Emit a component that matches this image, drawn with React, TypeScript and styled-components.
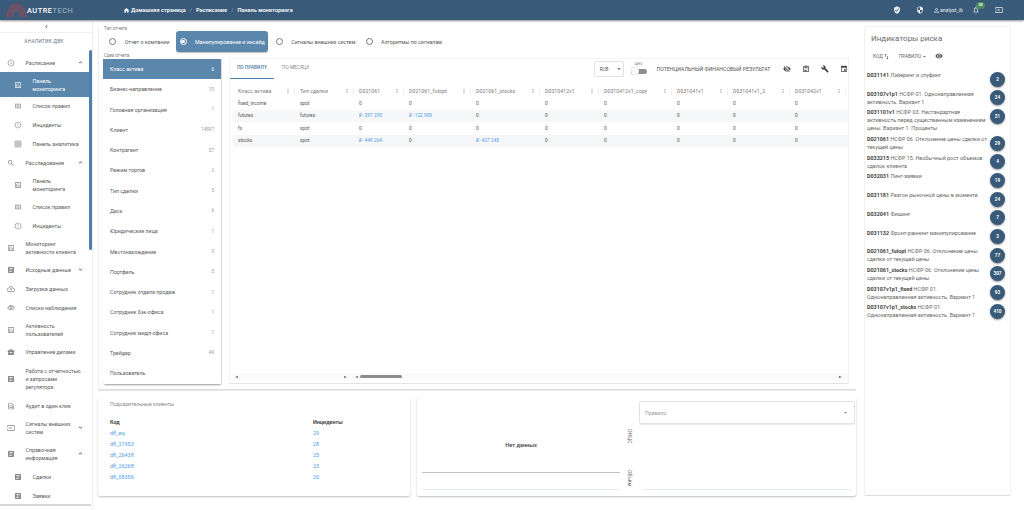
import React from 'react'
import styled, { createGlobalStyle } from 'styled-components'
import {
  MdAccessTime, MdOutlineAssessment, MdOutlineViewColumn, MdErrorOutline, MdGridOn, MdSearch, MdArticle,
  MdOutlineCloudUpload, MdOutlineVisibility, MdBusinessCenter, MdOutlineFindInPage, MdOutlineInput,
  MdExpandLess, MdExpandMore, MdChevronLeft, MdHome, MdVerifiedUser, MdSecurity, MdPersonOutline,
  MdNotificationsNone, MdVisibilityOff, MdOutlineAssignment, MdBuild, MdEvent, MdMoreVert, MdSwapVert,
  MdVisibility, MdArrowDropDown, MdArrowDropUp
} from 'react-icons/md'

const Global = createGlobalStyle`
  html, body { margin: 0; padding: 0; background: #fff; }
  body { font-family: Roboto, "Liberation Sans", sans-serif; color: #555; overflow: hidden; }
  * { box-sizing: border-box; }
`

const Page = styled.div`
  width: 1024px;
  height: 510px;
  overflow: hidden;
  display: flex;
  flex-direction: column;
`

const Header = styled.header`
  height: 20px;
  flex: none;
  background: #395a78;
  box-shadow: 0 1px 2px rgba(0, 0, 0, .45);
  display: flex;
  align-items: center;
  color: #fff;
  font-size: 5.6px;
  padding-left: 7px;
  position: relative;
  z-index: 3;
`
const Brand = styled.div`
  display: flex;
  align-items: center;
  width: 116px;
  font-size: 7.4px;
  letter-spacing: .5px;
  font-weight: 500;
  span { color: #a9bccd; font-weight: 400; }
`
const Crumbs = styled.nav`
  display: flex;
  align-items: center;
  font-weight: 700;
  color: #eef2f6;
  svg { margin-right: 1px; }
  i { font-style: normal; font-weight: 400; margin: 0 4px; color: #8fa6bb; }
`
const HeaderTools = styled.div`
  margin-left: auto;
  display: flex;
  align-items: center;
  padding-right: 21px;
`
const HeaderTool = styled.span<{ $gap: number }>`
  display: flex;
  align-items: center;
  margin-left: ${p => p.$gap}px;
  position: relative;
  font-size: 5.2px;
  color: #e6ecf2;
`
const BellBadge = styled.b`
  position: absolute;
  left: 4px;
  top: -4px;
  width: 9px;
  height: 7px;
  border-radius: 4px;
  background: #4c8a5f;
  color: #fff;
  font-size: 3.6px;
  line-height: 7px;
  text-align: center;
`

const Body = styled.div`
  flex: 1;
  display: flex;
  min-height: 0;
`

const Sidebar = styled.aside`
  width: 93px;
  flex: none;
  border-right: 1px solid #eee;
  position: relative;
  overflow: hidden;
`
const Collapse = styled.div`
  height: 13px;
  display: flex;
  align-items: center;
  justify-content: center;
  border-bottom: 1px solid #f2f2f2;
  color: #555;
`
const Role = styled.div`
  height: 20px;
  line-height: 16px;
  text-align: center;
  font-size: 4.9px;
  color: #66788a;
  letter-spacing: .15px;
  padding-right: 4px;
`
const NavItem = styled.div<{ $sub?: boolean; $active?: boolean; $tall?: number }>`
  width: 89px;
  min-height: ${p => p.$tall ?? 19}px;
  padding: 4.5px 0 4.5px ${p => (p.$sub ? 11 : 4)}px;
  display: flex;
  align-items: center;
  font-size: 5.3px;
  line-height: 8px;
  background: ${p => (p.$active ? '#5b87ac' : 'transparent')};
  color: ${p => (p.$active ? '#fff' : '#5a5a5a')};
`
const NavIcon = styled.span<{ $active?: boolean }>`
  width: 14px;
  flex: none;
  display: flex;
  justify-content: center;
  margin-right: 7.5px;
  color: ${p => (p.$active ? '#e6edf3' : '#888')};
`
const NavLabel = styled.span<{ $w: number }>`
  width: ${p => p.$w}px;
  flex: none;
`
const ScrollThumb = styled.div`
  position: absolute;
  left: 89px;
  top: 30px;
  width: 3px;
  height: 200px;
  border-radius: 2px;
  background: #4a80ad;
`
const BottomBar = styled.div`
  position: absolute;
  left: 0;
  right: 1px;
  bottom: 4px;
  height: 2px;
  background: #d8d8d8;
`

const Center = styled.main`
  width: 758px;
  margin-left: 5px;
  flex: none;
  display: flex;
  flex-direction: column;
`
const TopCard = styled.section`
  height: 364px;
  margin-top: 6px;
  padding-left: 4px;
  border-left: 1px solid #f0f0f0;
  border-bottom: 1px solid #ddd;
  box-shadow: 0 1px 1px rgba(0, 0, 0, .1);
  border-radius: 1px;
`
const SmallLabel = styled.div<{ $top: number }>`
  font-size: 4.5px;
  color: #777;
  line-height: 5px;
  margin-top: ${p => p.$top}px;
  padding-left: 1px;
`
const RadioRow = styled.div`
  display: flex;
  align-items: center;
  height: 21px;
`
const RadioOption = styled.div<{ $on?: boolean; $w: number; $pad: number }>`
  width: ${p => p.$w}px;
  height: 21px;
  flex: none;
  display: flex;
  align-items: center;
  padding-left: ${p => p.$pad}px;
  border-radius: 3px;
  font-size: 5.3px;
  background: ${p => (p.$on ? '#5b87ac' : 'transparent')};
  color: ${p => (p.$on ? '#fff' : '#555')};
  box-shadow: ${p => (p.$on ? '0 1px 1px rgba(0,0,0,.25)' : 'none')};
`
const RadioDot = styled.span<{ $on?: boolean }>`
  width: 7px;
  height: 7px;
  border-radius: 50%;
  border: .7px solid ${p => (p.$on ? '#fff' : '#777')};
  margin-right: 8.5px;
  flex: none;
  display: flex;
  align-items: center;
  justify-content: center;
  &::after {
    content: '';
    width: 3.5px;
    height: 3.5px;
    border-radius: 50%;
    background: ${p => (p.$on ? '#fff' : 'transparent')};
  }
`
const Columns = styled.div`
  display: flex;
  gap: 7px;
`
const SliceList = styled.div`
  width: 119px;
  height: 325px;
  margin-top: 1px;
  flex: none;
  box-shadow: 0 2px 2px -1px rgba(0, 0, 0, .4);
  border-radius: 0 0 2px 2px;
  border-right: 1px solid #ddd;
  overflow: hidden;
`
const SliceItem = styled.div<{ $active?: boolean }>`
  height: 20.27px;
  display: flex;
  align-items: center;
  justify-content: space-between;
  padding: 0 7px;
  font-size: 5.3px;
  background: ${p => (p.$active ? '#5b87ac' : '#fff')};
  color: ${p => (p.$active ? '#fff' : '#5a5a5a')};
  small { font-size: 4.6px; color: ${p => (p.$active ? '#fff' : '#999')}; }
`
const TablePanel = styled.div`
  width: 620px;
  height: 326px;
  flex: none;
  border-top: 1px solid #f4f4f4;
  border-bottom: 1px solid #e4e4e4;
  border-right: 1px solid #f0f0f0;
  border-left: 1px solid #f4f4f4;
  display: flex;
  flex-direction: column;
`
const PanelTop = styled.div`
  height: 20px;
  display: flex;
  align-items: flex-start;
`
const Tab = styled.div<{ $on?: boolean; $w: number }>`
  width: ${p => p.$w}px;
  height: 20px;
  line-height: 18px;
  text-align: center;
  font-size: 4.8px;
  font-weight: ${p => (p.$on ? 500 : 400)};
  color: ${p => (p.$on ? '#4f7fa8' : '#8a8a8a')};
  border-bottom: ${p => (p.$on ? '1px solid #4f7fa8' : 'none')};
`
const Currency = styled.div`
  margin-left: 276px;
  margin-top: 2px;
  width: 30px;
  height: 16px;
  border: 1px solid #e2e2e2;
  border-radius: 2px;
  font-size: 4.6px;
  color: #555;
  display: flex;
  align-items: center;
  padding-left: 5px;
  justify-content: space-between;
`
const Switch = styled.div`
  width: 16px;
  margin-left: 7px;
  margin-top: 1px;
  position: relative;
  font-size: 4.2px;
  color: #888;
  text-align: center;
  line-height: 7px;
`
const SwitchTrack = styled.div`
  height: 5px;
  margin-top: 2px;
  background: #8e8e8e;
  border-radius: 3px;
  &::after {
    content: '';
    position: absolute;
    left: 0;
    top: 6.5px;
    width: 8px;
    height: 8px;
    border-radius: 50%;
    background: #fafafa;
    box-shadow: 0 0 1px rgba(0, 0, 0, .4);
  }
`
const ResultLabel = styled.div`
  margin-left: 10px;
  width: 127px;
  line-height: 20px;
  font-size: 5.2px;
  color: #555;
  white-space: nowrap;
`
const PanelTools = styled.div`
  display: flex;
  align-items: center;
  height: 20px;
  gap: 11px;
  color: #444;
`
const Grid = styled.div`
  margin: 5px 0 0 3px;
  flex: 1;
  display: flex;
  flex-direction: column;
`
const Row = styled.div<{ $odd?: boolean }>`
  display: grid;
  grid-template-columns: 62px 59px 50px 67px 69px 59px 73px 56px 62px 56px 1.5px;
  height: 12.4px;
  align-items: center;
  background: ${p => (p.$odd ? '#f6f7f8' : '#fff')};
  font-size: 4.8px;
  color: #555;
`
const HeadRow = styled(Row)`
  height: 13.4px;
  color: #777;
  font-size: 5.1px;
`
const HeadCell = styled.div`
  display: flex;
  align-items: center;
  justify-content: space-between;
  padding-left: 5px;
  border-right: 1px solid #eee;
  height: 8px;
  padding-right: 5px;
  white-space: nowrap;
  letter-spacing: .1px;
  svg { color: #555; flex: none; margin-right: -2px; }
`
const Cell = styled.div<{ $link?: boolean }>`
  padding-left: 5px;
  color: ${p => (p.$link ? '#4a9bea' : 'inherit')};
`
const HScroll = styled.div`
  margin: auto 0 3px 3px;
  height: 7px;
  background: #fafafa;
  display: flex;
  align-items: center;
  color: #666;
  font-size: 0;
`
const Thumb = styled.div`
  width: 42px;
  height: 2.5px;
  margin-left: 2px;
  border-radius: 2px;
  background: #8c8c8c;
`
const Arrow = styled.div<{ $left?: boolean; $gap: number }>`
  width: 0;
  height: 0;
  margin-left: ${p => p.$gap}px;
  border-top: 1.8px solid transparent;
  border-bottom: 1.8px solid transparent;
  ${p => (p.$left ? 'border-right: 3px solid #666;' : 'border-left: 3px solid #666;')}
`

const BottomRow = styled.div`
  display: flex;
  gap: 7px;
  margin-top: 7px;
`
const Card = styled.section<{ $w: number }>`
  width: ${p => p.$w}px;
  height: 99px;
  flex: none;
  border-radius: 2px;
  box-shadow: 0 1px 2px rgba(0, 0, 0, .25);
`
const SuspectCard = styled(Card)`
  padding: 4px 12px;
`
const CardTitle = styled.div`
  font-size: 5.2px;
  line-height: 6px;
  color: #8a8a8a;
`
const Suspects = styled.div`
  margin-top: 9px;
  display: grid;
  grid-template-columns: 203px 1fr;
  grid-auto-rows: 11px;
  align-items: center;
  font-size: 5.4px;
  b { color: #444; font-weight: 700; }
  a { color: #4a9bea; }
`
const ChartCard = styled(Card)`
  display: flex;
  padding: 4px 1px 6px 5px;
`
const ChartArea = styled.div`
  width: 198px;
  flex: none;
  display: flex;
  flex-direction: column;
`
const NoData = styled.div`
  height: 73px;
  padding-top: 41px;
  text-align: center;
  font-size: 5.6px;
  font-weight: 700;
  color: #555;
  border-bottom: 1.5px solid #c0c0c0;
`
const BaseLine = styled.div`
  margin-top: 16px;
  border-bottom: 1px solid #e6ecf5;
`
const AxisColumn = styled.div`
  width: 19px;
  flex: none;
  display: flex;
  flex-direction: column;
  align-items: center;
  padding-top: 28px;
`
const AxisLabel = styled.span<{ $top: number }>`
  writing-mode: vertical-rl;
  font-size: 5.2px;
  color: #666;
  margin-top: ${p => p.$top}px;
`
const ChartSide = styled.div`
  flex: 1;
  display: flex;
  flex-direction: column;
`
const RuleSelect = styled.div`
  height: 23px;
  border: 1px solid #e2e2e2;
  border-radius: 2px;
  display: flex;
  align-items: center;
  justify-content: space-between;
  padding: 0 5px;
  font-size: 5.2px;
  color: #999;
  box-shadow: 0 1px 1px rgba(0, 0, 0, .08);
`
const SideLine = styled.div`
  margin: 65px 4px 0;
  border-bottom: 1px solid #e6ecf5;
`

const RiskCard = styled.aside`
  width: 147px;
  height: 470px;
  margin: 6px 0 0 8px;
  flex: none;
  border: 1px solid #f1f1f1;
  border-bottom: 1px solid #ddd;
  border-radius: 2px;
  padding: 6px 0 0 2px;
`
const RiskTitle = styled.h2`
  margin: 0 0 0 4px;
  font-size: 8px;
  line-height: 11px;
  font-weight: 400;
  color: #6b6b6b;
`
const RiskTools = styled.div`
  display: flex;
  align-items: center;
  height: 14px;
  margin: 5px 0 8px 6px;
  font-size: 4.8px;
  color: #666;
`
const RiskTool = styled.span<{ $gap: number }>`
  display: flex;
  align-items: center;
  margin-right: ${p => p.$gap}px;
  svg { color: #555; }
`
const RiskRow = styled.div`
  display: flex;
  justify-content: space-between;
  min-height: 16px;
  margin-bottom: 2.7px;
  padding-right: 5px;
`
const RiskText = styled.div`
  width: 121px;
  font-size: 5.4px;
  line-height: 8px;
  color: #666;
  b { color: #444; font-weight: 700; }
`
const RiskBadge = styled.div`
  width: 15px;
  height: 15px;
  margin-top: .5px;
  flex: none;
  border-radius: 50%;
  background: #395a78;
  color: #fff;
  font-size: 4.6px;
  font-weight: 700;
  line-height: 15px;
  text-align: center;
  box-shadow: 0 1px 2px rgba(0, 0, 0, .4);
`

const Logo = () => (
  <svg width="21" height="16" viewBox="0 0 21 16" style={{ marginLeft: -1 }}>
    {[9.5, 7.5, 5.5, 3.5].map((r, i) => (
      <path key={r} d={`M${10.5 - r} 15 A${r} ${r + 3} 0 0 1 ${10.5 + r} 15`} fill="none" stroke={i % 2 ? '#6c5a6c' : '#8e4a5c'} strokeWidth="1.4" />
    ))}
  </svg>
)

type Nav = { icon: React.ElementType; label: string; sub?: boolean; active?: boolean; chevron?: 'up' | 'down'; tall?: number }

const navItems: Nav[] = [
  { icon: MdAccessTime, label: 'Расписание', chevron: 'up' },
  { icon: MdOutlineAssessment, label: 'Панель мониторинга', sub: true, active: true },
  { icon: MdOutlineViewColumn, label: 'Список правил', sub: true, tall: 18 },
  { icon: MdErrorOutline, label: 'Инциденты', sub: true },
  { icon: MdGridOn, label: 'Панель аналитика', sub: true },
  { icon: MdSearch, label: 'Расследование', chevron: 'up' },
  { icon: MdOutlineAssessment, label: 'Панель мониторинга', sub: true },
  { icon: MdOutlineViewColumn, label: 'Список правил', sub: true },
  { icon: MdErrorOutline, label: 'Инциденты', sub: true },
  { icon: MdOutlineAssessment, label: 'Мониторинг активности клиента' },
  { icon: MdArticle, label: 'Исходные данные', chevron: 'down' },
  { icon: MdOutlineCloudUpload, label: 'Загрузка данных' },
  { icon: MdOutlineVisibility, label: 'Списки наблюдения' },
  { icon: MdOutlineAssessment, label: 'Активность пользователей' },
  { icon: MdBusinessCenter, label: 'Управление делами' },
  { icon: MdArticle, label: 'Работа с отчетностью и запросами регулятора', tall: 35 },
  { icon: MdOutlineFindInPage, label: 'Аудит в один клик' },
  { icon: MdOutlineInput, label: 'Сигналы внешних систем', chevron: 'down' },
  { icon: MdArticle, label: 'Справочная информация', chevron: 'up', tall: 27 },
  { icon: MdArticle, label: 'Сделки', sub: true },
  { icon: MdArticle, label: 'Заявки', sub: true }
]

const slices: [string, string][] = [
  ['Класс актива', '6'], ['Бизнес-направление', '10'], ['Головная организация', '1'], ['Клиент', '14897'],
  ['Контрагент', '57'], ['Режим торгов', '2'], ['Тип сделки', '5'], ['Деск', '6'], ['Юридические лица', '1'],
  ['Местонахождение', '3'], ['Портфель', '5'], ['Сотрудник отдела продаж', '1'], ['Сотрудник бэк-офиса', '1'],
  ['Сотрудник мидл-офиса', '1'], ['Трейдер', '49'], ['Пользователь', '']
]

const columns = ['Класс актива', 'Тип сделки', 'D021061', 'D021061_futopt', 'D021061_stocks', 'D0310412v1', 'D0310412v1_copy', 'D031041v1', 'D031041v1_2', 'D031042v1']
const rows = [
  ['fixed_income', 'spot', '0', '0', '0', '0', '0', '0', '0', '0'],
  ['futures', 'futures', '₽ -397 293', '₽ -122 909', '0', '0', '0', '0', '0', '0'],
  ['fx', 'spot', '0', '0', '0', '0', '0', '0', '0', '0'],
  ['stocks', 'spot', '₽ -449 264', '0', '₽ -427 245', '0', '0', '0', '0', '0']
]

const suspects = [['dfl_eq', '29'], ['dfl_21953', '28'], ['dfl_26438', '25'], ['dfl_26268', '23'], ['dfl_08356', '20']]

const risks: [string, string, string][] = [
  ['D031141', 'Лэйеринг и спуфинг', '2'],
  ['D03107v1p1', 'НСФР 01. Однонаправленная активность. Вариант 1', '24'],
  ['D031101v1', 'НСФР 03. Нестандартная активность перед существенным изменением цены. Вариант 1. Проценты', '31'],
  ['D021061', 'НСФР 06. Отклонение цены сделки от текущей цены', '29'],
  ['D033215', 'НСФР 15. Необычный рост объемов сделок клиента', '4'],
  ['D032031', 'Пинг-заявки', '19'],
  ['D031181', 'Разгон рыночной цены в моменте', '24'],
  ['D032041', 'Фишинг', '7'],
  ['D031132', 'Фронт-раннинг манипулирование', '3'],
  ['D021061_futopt', 'НСФР 06. Отклонение цены сделки от текущей цены', '77'],
  ['D021061_stocks', 'НСФР 06. Отклонение цены сделки от текущей цены', '307'],
  ['D03107v1p1_fixed', 'НСФР 01. Однонаправленная активность. Вариант 1', '93'],
  ['D03107v1p1_stocks', 'НСФР 01. Однонаправленная активность. Вариант 1', '410']
]

export default function App() {
  return (
    <Page>
      <Global />
      <Header>
        <Brand>
          <Logo />
          AUTRE<span>TECH</span>
        </Brand>
        <Crumbs>
          <MdHome size={7} />
          Домашняя страница<i>/</i>Расписание<i>/</i>Панель мониторинга
        </Crumbs>
        <HeaderTools>
          <HeaderTool $gap={0}><MdVerifiedUser size={8} /></HeaderTool>
          <HeaderTool $gap={15}><MdSecurity size={8} /></HeaderTool>
          <HeaderTool $gap={9}><MdPersonOutline size={7} />analyst_ib</HeaderTool>
          <HeaderTool $gap={9}><MdNotificationsNone size={8} /><BellBadge>30</BellBadge></HeaderTool>
          <HeaderTool $gap={15}><MdOutlineInput size={8} /></HeaderTool>
        </HeaderTools>
      </Header>
      <Body>
        <Sidebar>
          <Collapse><MdChevronLeft size={7} /></Collapse>
          <Role>АНАЛИТИК ДВК</Role>
          {navItems.map((item, i) => {
            const Icon = item.icon
            return (
              <NavItem key={i} $sub={item.sub} $active={item.active} $tall={item.tall}>
                <NavIcon $active={item.active}><Icon size={8} /></NavIcon>
                <NavLabel $w={item.sub ? 47 : item.chevron ? 51 : 55.5}>{item.label}</NavLabel>
                {item.chevron === 'up' && <MdExpandLess size={7} />}
                {item.chevron === 'down' && <MdExpandMore size={7} />}
              </NavItem>
            )
          })}
          <ScrollThumb />
          <BottomBar />
        </Sidebar>
        <Center>
          <TopCard>
            <SmallLabel $top={0}>Тип отчета</SmallLabel>
            <RadioRow>
              <RadioOption $w={73} $pad={6.2}><RadioDot />Отчет о компании</RadioOption>
              <RadioOption $w={92} $pad={3.5} $on><RadioDot $on />Манипулирование и инсайд</RadioOption>
              <RadioOption $w={88} $pad={7.8}><RadioDot />Сигналы внешних систем</RadioOption>
              <RadioOption $w={90} $pad={9.5}><RadioDot />Алгоритмы по сигналам</RadioOption>
            </RadioRow>
            <SmallLabel $top={1}>Срез отчета</SmallLabel>
            <Columns>
              <SliceList>
                {slices.map(([name, count], i) => (
                  <SliceItem key={name} $active={i === 0}>
                    {name}
                    <small>{count}</small>
                  </SliceItem>
                ))}
              </SliceList>
              <TablePanel>
                <PanelTop>
                  <Tab $w={44} $on>ПО ПРАВИЛУ</Tab>
                  <Tab $w={44}>ПО МЕСЯЦУ</Tab>
                  <Currency>RUB<MdArrowDropDown size={8} /></Currency>
                  <Switch>ABS<SwitchTrack /></Switch>
                  <ResultLabel>ПОТЕНЦИАЛЬНЫЙ ФИНАНСОВЫЙ РЕЗУЛЬТАТ</ResultLabel>
                  <PanelTools>
                    <MdVisibilityOff size={8} />
                    <MdOutlineAssignment size={8} />
                    <MdBuild size={8} />
                    <MdEvent size={8} />
                  </PanelTools>
                </PanelTop>
                <Grid>
                  <HeadRow>
                    {columns.map(c => (
                      <HeadCell key={c}>{c}<MdMoreVert size={6} /></HeadCell>
                    ))}
                  </HeadRow>
                  {rows.map((row, r) => (
                    <Row key={r} $odd={r % 2 === 1}>
                      {row.map((v, c) => (
                        <Cell key={c} $link={v.startsWith('₽')}>{v}</Cell>
                      ))}
                    </Row>
                  ))}
                </Grid>
                <HScroll>
                  <Arrow $left $gap={2} />
                  <Arrow $gap={106} />
                  <Arrow $left $gap={8} />
                  <Thumb />
                  <Arrow $gap={437} />
                </HScroll>
              </TablePanel>
            </Columns>
          </TopCard>
          <BottomRow>
            <SuspectCard $w={312}>
              <CardTitle>Подозрительные клиенты</CardTitle>
              <Suspects>
                <b>Код</b>
                <b>Инциденты</b>
                {suspects.map(([code, n]) => (
                  <React.Fragment key={code}>
                    <a>{code}</a>
                    <a>{n}</a>
                  </React.Fragment>
                ))}
              </Suspects>
            </SuspectCard>
            <ChartCard $w={439}>
              <ChartArea>
                <NoData>Нет данных</NoData>
                <BaseLine />
              </ChartArea>
              <AxisColumn>
                <AxisLabel $top={0}>ОНЦС</AxisLabel>
                <AxisLabel $top={27}>Объём</AxisLabel>
              </AxisColumn>
              <ChartSide>
                <RuleSelect>Правило<MdArrowDropDown size={7} color="#777" /></RuleSelect>
                <SideLine />
              </ChartSide>
            </ChartCard>
          </BottomRow>
        </Center>
        <RiskCard>
          <RiskTitle>Индикаторы риска</RiskTitle>
          <RiskTools>
            <RiskTool $gap={9}>КОД<MdSwapVert size={7} /></RiskTool>
            <RiskTool $gap={7}>ПРАВИЛО<MdArrowDropUp size={7} /></RiskTool>
            <RiskTool $gap={0}><MdVisibility size={8} /></RiskTool>
          </RiskTools>
          {risks.map(([code, text, n]) => (
            <RiskRow key={code}>
              <RiskText><b>{code}</b> {text}</RiskText>
              <RiskBadge>{n}</RiskBadge>
            </RiskRow>
          ))}
        </RiskCard>
      </Body>
    </Page>
  )
}
